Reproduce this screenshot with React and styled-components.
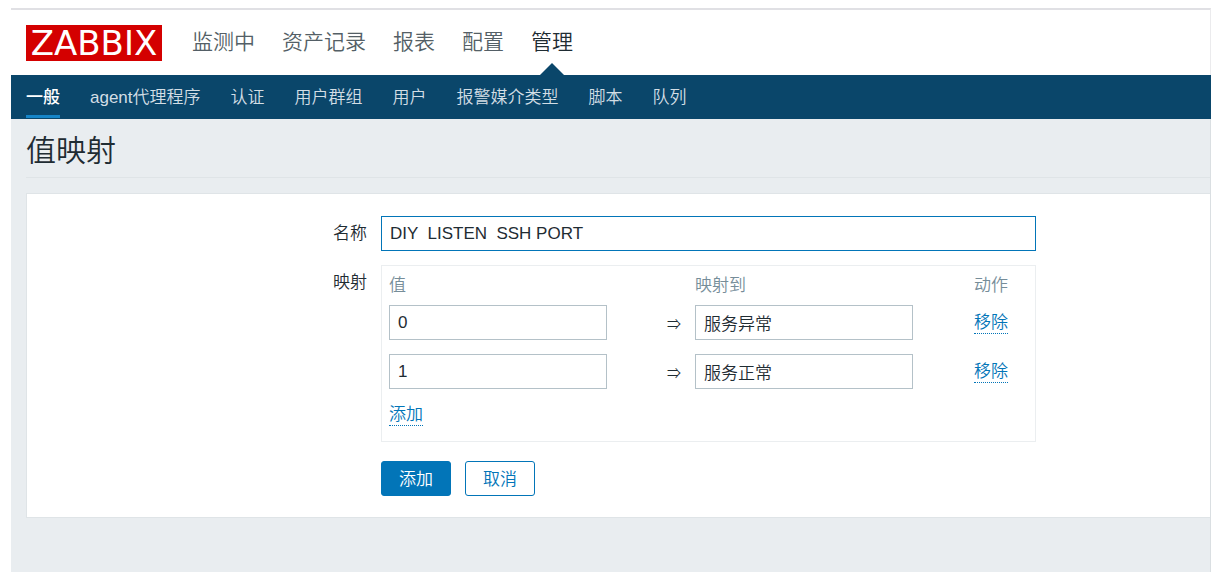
import React, { useState } from "react";
import styled, { createGlobalStyle } from "styled-components";

const GlobalStyle = createGlobalStyle`
  * {
    box-sizing: border-box;
  }

  body {
    margin: 0;
    background: #fff;
    color: #1f2c33;
    font-family: "Liberation Sans", "Noto Sans CJK SC", sans-serif;
    font-size: 17px;
    font-weight: 350;
    line-height: 22px;
  }

  input,
  button {
    font: inherit;
  }
`;

const Page = styled.div`
  display: flex;
  flex-direction: column;
  min-height: 100vh;
  padding: 8px 6px 0 11px;
`;

const Header = styled.header`
  display: flex;
  align-items: stretch;
  gap: 30px;
  height: 67px;
  padding-left: 15px;
  border-top: 2px solid #e0e0e4;
  border-right: 1px solid #ebebed;
`;

const Logo = styled.a`
  display: flex;
  align-items: center;
  justify-content: center;
  align-self: flex-start;
  width: 136px;
  height: 36px;
  margin-top: 15px;
  background: #d40000;
  color: #fff;
  font-family: "DejaVu Sans", sans-serif;
  font-size: 34px;
  font-weight: 400;
  line-height: 36px;
  text-decoration: none;
`;

const TopMenu = styled.nav`
  display: flex;
  gap: 27px;
`;

const TopLink = styled.a`
  position: relative;
  padding-top: 18px;
  color: ${(props) => (props.$active ? "#1f2c33" : "#545f66")};
  font-size: 21px;
  line-height: 28px;
  text-decoration: none;
  white-space: nowrap;

  &::after {
    content: "";
    display: ${(props) => (props.$active ? "block" : "none")};
    position: absolute;
    bottom: 0;
    left: 50%;
    margin-left: -12px;
    border: 12px solid transparent;
    border-top: 0;
    border-bottom-color: #0a466a;
  }
`;

const SubMenu = styled.nav`
  display: flex;
  gap: 30px;
  height: 44px;
  padding-left: 15px;
  background: #0a466a;
`;

const SubLink = styled.a`
  height: 43px;
  padding-top: 12px;
  border-bottom: 3px solid ${(props) => (props.$active ? "#1585c8" : "transparent")};
  color: ${(props) => (props.$active ? "#fff" : "#d3dee5")};
  font-weight: ${(props) => (props.$active ? 500 : 350)};
  text-decoration: none;
  white-space: nowrap;
`;

const Main = styled.main`
  flex: 1;
  padding-left: 15px;
  border-right: 1px solid #dadfe2;
  background: #e9edf0;
`;

const Title = styled.h1`
  height: 59px;
  margin: 0 0 15px;
  padding-top: 12px;
  border-bottom: 1px solid #dfe4e7;
  font-size: 30px;
  font-weight: 350;
  line-height: 40px;
`;

const Form = styled.form`
  display: grid;
  grid-template-columns: 340px minmax(0, 655px);
  gap: 14px;
  padding: 22px 0 21px;
  border: 1px solid #dfe4e7;
  border-right: 0;
  background: #fff;
`;

const Label = styled.label`
  padding-top: 7px;
  text-align: right;
`;

const TextInput = styled.input`
  display: block;
  width: 100%;
  max-width: ${(props) => props.$width || "none"};
  height: 35px;
  padding: 0 8px;
  border: 1px solid ${(props) => (props.$active ? "#0275b8" : "#b4c1c8")};
  border-radius: 0;
  outline: none;
  background: #fff;
  color: #1f2c33;
`;

const MappingBox = styled.div`
  padding: 5px 0 9px 7px;
  border: 1px solid #ebeef0;
`;

const MappingTable = styled.table`
  width: 100%;
  border-collapse: collapse;
  table-layout: fixed;

  th,
  td {
    padding: 0;
    text-align: left;
  }

  th {
    height: 27px;
    padding-top: 2px;
    color: #768d99;
    font-weight: 350;
  }

  td {
    height: 49px;
  }

  tfoot td {
    height: 36px;
  }
`;

const Col = styled.col`
  width: ${(props) => props.$width};
`;

const Arrow = styled.span`
  display: block;
  padding-top: 2px;
  font-size: 14px;
  font-weight: 400;
  text-align: center;
`;

const LinkButton = styled.button`
  display: block;
  padding: 1px 0 0;
  border: 0;
  border-bottom: 1px dotted #0275b8;
  background: transparent;
  color: #0275b8;
  line-height: 21px;
  cursor: pointer;
`;

const Actions = styled.div`
  display: flex;
  grid-column: 2;
  gap: 14px;
  padding-top: 5px;
`;

const Button = styled.button`
  width: 70px;
  height: 35px;
  padding: 2px 0 0;
  border: 1px solid #0275b8;
  border-radius: 3px;
  background: ${(props) => (props.$primary ? "#0275b8" : "#fff")};
  color: ${(props) => (props.$primary ? "#fff" : "#0275b8")};
  cursor: pointer;
`;

const topItems = ["监测中", "资产记录", "报表", "配置", "管理"];
const subItems = ["一般", "agent代理程序", "认证", "用户群组", "用户", "报警媒介类型", "脚本", "队列"];

const App = () => {
  const [name, setName] = useState("DIY  LISTEN  SSH PORT");
  const [mappings, setMappings] = useState([
    { id: 1, value: "0", newValue: "服务异常" },
    { id: 2, value: "1", newValue: "服务正常" },
  ]);

  const update = (id, key, value) => {
    setMappings(mappings.map((row) => (row.id === id ? { ...row, [key]: value } : row)));
  };

  const remove = (id) => {
    setMappings(mappings.filter((row) => row.id !== id));
  };

  const add = () => {
    setMappings([...mappings, { id: Date.now(), value: "", newValue: "" }]);
  };

  return (
    <>
      <GlobalStyle />
      <Page>
        <Header>
          <Logo href="#">ZABBIX</Logo>
          <TopMenu>
            {topItems.map((item) => (
              <TopLink key={item} href="#" $active={item === "管理"}>
                {item}
              </TopLink>
            ))}
          </TopMenu>
        </Header>
        <SubMenu>
          {subItems.map((item) => (
            <SubLink key={item} href="#" $active={item === "一般"}>
              {item}
            </SubLink>
          ))}
        </SubMenu>
        <Main>
          <Title>值映射</Title>
          <Form onSubmit={(e) => e.preventDefault()}>
            <Label htmlFor="name">名称</Label>
            <TextInput
              id="name"
              $active
              value={name}
              onChange={(e) => setName(e.target.value)}
            />
            <Label as="div" id="mappings">映射</Label>
            <MappingBox>
              <MappingTable aria-labelledby="mappings">
                <colgroup>
                  <Col $width="264px" />
                  <Col $width="42px" />
                  <Col $width="279px" />
                  <Col />
                </colgroup>
                <thead>
                  <tr>
                    <th id="col-value">值</th>
                    <th></th>
                    <th id="col-new">映射到</th>
                    <th>动作</th>
                  </tr>
                </thead>
                <tbody>
                  {mappings.map((row) => (
                    <tr key={row.id}>
                      <td>
                        <TextInput
                          $width="218px"
                          aria-labelledby="col-value"
                          value={row.value}
                          onChange={(e) => update(row.id, "value", e.target.value)}
                        />
                      </td>
                      <td>
                        <Arrow>⇒</Arrow>
                      </td>
                      <td>
                        <TextInput
                          $width="218px"
                          aria-labelledby="col-new"
                          value={row.newValue}
                          onChange={(e) => update(row.id, "newValue", e.target.value)}
                        />
                      </td>
                      <td>
                        <LinkButton type="button" onClick={() => remove(row.id)}>
                          移除
                        </LinkButton>
                      </td>
                    </tr>
                  ))}
                </tbody>
                <tfoot>
                  <tr>
                    <td colSpan={4}>
                      <LinkButton type="button" onClick={add}>
                        添加
                      </LinkButton>
                    </td>
                  </tr>
                </tfoot>
              </MappingTable>
            </MappingBox>
            <Actions>
              <Button type="submit" $primary>
                添加
              </Button>
              <Button type="button">取消</Button>
            </Actions>
          </Form>
        </Main>
      </Page>
    </>
  );
};

export default App;
